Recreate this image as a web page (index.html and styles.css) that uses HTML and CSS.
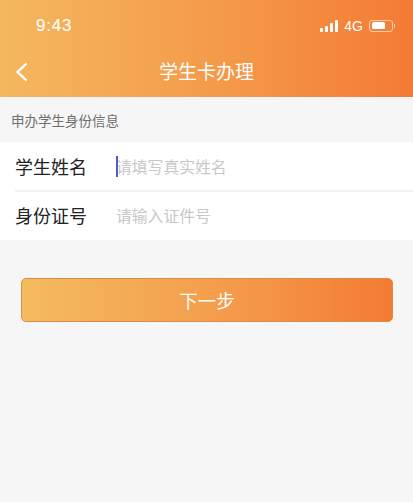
FILE: index.html
```html
<!DOCTYPE html>
<html lang="zh-CN">
<head>
    <meta charset="UTF-8">
    <meta name="viewport" content="width=device-width, initial-scale=1.0">
    <title>学生卡办理</title>
    <link rel="stylesheet" href="styles.css">
</head>
<body>
    <div class="header">
        <div class="status-bar">
            <span class="time">9:43</span>
            <div class="status-icons">
                <div class="signal">
                    <span class="s1"></span>
                    <span class="s2"></span>
                    <span class="s3"></span>
                    <span class="s4"></span>
                </div>
                <span class="network">4G</span>
                <div class="battery">
                    <div class="battery-level"></div>
                </div>
                <div class="battery-tip"></div>
            </div>
        </div>
        <div class="nav-bar">
            <svg class="back" width="14" height="20" viewBox="0 0 14 20">
                <path d="M11.5 1.5 L2.5 10 L11.5 18.5" fill="none" stroke="#fff" stroke-width="2.4"/>
            </svg>
            <h1>学生卡办理</h1>
        </div>
    </div>

    <div class="section-title">申办学生身份信息</div>

    <div class="form">
        <div class="form-row">
            <label>学生姓名</label>
            <div class="field">
                <span class="cursor"></span>
                <span class="placeholder">请填写真实姓名</span>
            </div>
        </div>
        <div class="form-row">
            <label>身份证号</label>
            <div class="field">
                <span class="placeholder">请输入证件号</span>
            </div>
        </div>
    </div>

    <button class="next">下一步</button>
</body>
</html>
```

FILE: styles.css
```css
* {
    box-sizing: border-box;
    margin: 0;
    padding: 0;
    font-family: "Liberation Sans", "Noto Sans CJK SC", sans-serif;
}

body {
    width: 413px;
    height: 502px;
    overflow: hidden;
    background-color: #f6f6f6;
}

.header {
    height: 97px;
    padding: 0 18px 0 15px;
    background: linear-gradient(90deg, #f4b85e 0%, #f49c4b 50%, #f47b34 100%);
    color: white;
}

.status-bar {
    display: flex;
    justify-content: space-between;
    align-items: center;
    height: 51px;
}

.time {
    margin-left: 21px;
    font-size: 17px;
    letter-spacing: 0.8px;
    -webkit-text-stroke: 0.1px white;
}

.status-icons {
    display: flex;
    align-items: center;
}

.signal {
    display: flex;
    align-items: flex-end;
    gap: 2px;
    height: 13px;
    margin-right: 6px;
}

.signal span {
    width: 3px;
    background-color: white;
    border-radius: 1px;
}

.s1 { height: 4px; }
.s2 { height: 6px; }
.s3 { height: 9px; }
.s4 { height: 12px; }

.network {
    font-size: 14px;
    margin-right: 6px;
}

.battery {
    width: 24px;
    height: 12px;
    padding: 1.5px;
    border: 1px solid rgba(255, 255, 255, 0.6);
    border-radius: 3px;
}

.battery-level {
    width: 13px;
    height: 100%;
    background-color: white;
    border-radius: 1.5px;
}

.battery-tip {
    width: 1px;
    height: 4px;
    margin-left: 1px;
    background-color: rgba(255, 255, 255, 0.6);
}

.nav-bar {
    display: flex;
    align-items: center;
    justify-content: center;
    position: relative;
    height: 44px;
}

.back {
    position: absolute;
    left: 0;
    top: 11px;
}

.nav-bar h1 {
    margin: 0 0 5px 3px;
    font-size: 19px;
    font-weight: 400;
}

.section-title {
    display: flex;
    align-items: center;
    height: 45px;
    padding: 1px 0 0 11px;
    font-size: 13.5px;
    color: #6e6e6e;
}

.form {
    background-color: white;
}

.form-row {
    display: flex;
    align-items: center;
    height: 50px;
    margin-left: 15px;
    border-bottom: 2px solid #f3f3f3;
}

.form-row:last-child {
    height: 48px;
    padding-bottom: 2px;
    border-bottom: none;
}

label {
    width: 101px;
    font-size: 18px;
    color: #222;
}

.field {
    display: flex;
    align-items: center;
    position: relative;
}

.placeholder {
    font-size: 15.8px;
    color: #c8c8c8;
}

.cursor {
    position: absolute;
    left: 0;
    top: 1px;
    width: 2px;
    height: 21px;
    background-color: #4a5fc8;
}

.next {
    display: block;
    width: 372px;
    height: 44px;
    margin: 38px 0 0 21px;
    border: 1px solid #dd8d3f;
    border-radius: 5px;
    background: linear-gradient(90deg, #f4bb60 0%, #f49f4e 50%, #f47b34 100%);
    color: white;
    font-size: 18.5px;
}
```
